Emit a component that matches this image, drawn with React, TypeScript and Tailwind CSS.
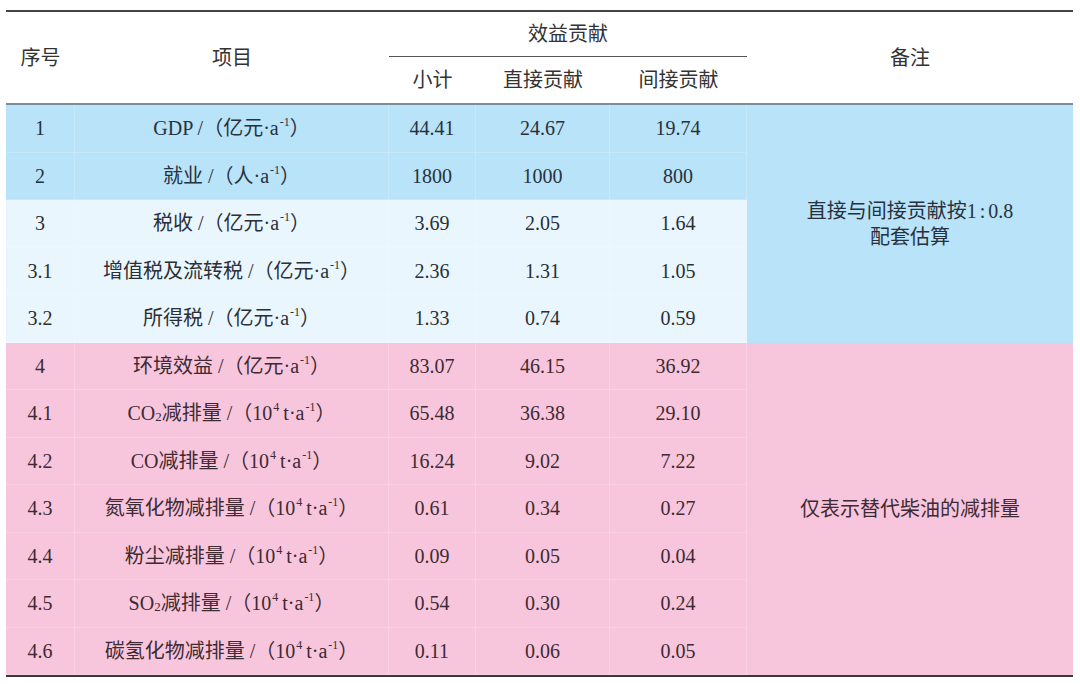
import React from "react";

type Row = {
  no: string;
  item: React.ReactNode;
  sub: string;
  direct: string;
  indirect: string;
  tone: "blue" | "light" | "pink";
};

const Inv = () => (
  <>
    a<sup className="text-[12px] ml-[1px]">-1</sup>
  </>
);
const Ton = () => (
  <>
    10<sup className="text-[12px] ml-[1px]">4</sup>
    <span className="ml-[4px]">t</span>·<Inv />
  </>
);
const Sub2 = () => <sub className="text-[13px]">2</sub>;

const rows: Row[] = [
  { no: "1", item: <>GDP /（亿元·<Inv />）</>, sub: "44.41", direct: "24.67", indirect: "19.74", tone: "blue" },
  { no: "2", item: <>就业 /（人·<Inv />）</>, sub: "1800", direct: "1000", indirect: "800", tone: "blue" },
  { no: "3", item: <>税收 /（亿元·<Inv />）</>, sub: "3.69", direct: "2.05", indirect: "1.64", tone: "light" },
  { no: "3.1", item: <>增值税及流转税 /（亿元·<Inv />）</>, sub: "2.36", direct: "1.31", indirect: "1.05", tone: "light" },
  { no: "3.2", item: <>所得税 /（亿元·<Inv />）</>, sub: "1.33", direct: "0.74", indirect: "0.59", tone: "light" },
  { no: "4", item: <>环境效益 /（亿元·<Inv />）</>, sub: "83.07", direct: "46.15", indirect: "36.92", tone: "pink" },
  { no: "4.1", item: <>CO<Sub2 />减排量 /（<Ton />）</>, sub: "65.48", direct: "36.38", indirect: "29.10", tone: "pink" },
  { no: "4.2", item: <>CO减排量 /（<Ton />）</>, sub: "16.24", direct: "9.02", indirect: "7.22", tone: "pink" },
  { no: "4.3", item: <>氮氧化物减排量 /（<Ton />）</>, sub: "0.61", direct: "0.34", indirect: "0.27", tone: "pink" },
  { no: "4.4", item: <>粉尘减排量 /（<Ton />）</>, sub: "0.09", direct: "0.05", indirect: "0.04", tone: "pink" },
  { no: "4.5", item: <>SO<Sub2 />减排量 /（<Ton />）</>, sub: "0.54", direct: "0.30", indirect: "0.24", tone: "pink" },
  { no: "4.6", item: <>碳氢化物减排量 /（<Ton />）</>, sub: "0.11", direct: "0.06", indirect: "0.05", tone: "pink" },
];

const toneCls = {
  blue: "bg-[#b9e3f8] text-[#27313d]",
  light: "bg-[#eaf6fe] text-[#2a2f36]",
  pink: "bg-[#f8c6dc] text-[#3d2a33]",
};

const cell = "flex items-center justify-center border-b border-r border-white/20";
const cols = "grid-cols-[69px_314px_87px_134px_137px_326px]";

export default function App() {
  return (
    <div
      className="min-h-screen bg-white pt-[10px] px-[6px]"
      style={{ fontFamily: '"Liberation Serif", "Noto Sans CJK SC", serif' }}
    >
      <div className="w-[1067px] text-[20px] leading-none">
        {/* Header */}
        <div
          className={`grid ${cols} grid-rows-[45px_46px] border-t-2 border-b-2 border-t-[#444] border-b-[#7f8d9a] text-[#333]`}
        >
          <div className="row-span-2 flex items-center justify-center">序号</div>
          <div className="row-span-2 flex items-center justify-center">项目</div>
          <div className="col-span-3 flex items-center justify-center border-b border-[#555]">效益贡献</div>
          <div className="row-span-2 flex items-center justify-center">备注</div>
          <div className="flex items-center justify-center">小计</div>
          <div className="flex items-center justify-center">直接贡献</div>
          <div className="flex items-center justify-center">间接贡献</div>
        </div>

        {/* Body */}
        <div className={`grid ${cols} grid-rows-[repeat(12,47.5px)] border-b-2 border-[#3a3a3a]`}>
          {rows.map((r, i) => (
            <React.Fragment key={r.no}>
              <div className={`${toneCls[r.tone]} ${cell}`}>{r.no}</div>
              <div className={`${toneCls[r.tone]} ${cell}`}>{r.item}</div>
              <div className={`${toneCls[r.tone]} ${cell}`}>{r.sub}</div>
              <div className={`${toneCls[r.tone]} ${cell}`}>{r.direct}</div>
              <div className={`${toneCls[r.tone]} ${cell}`}>{r.indirect}</div>
              {i === 0 && (
                <div className="row-span-5 bg-[#b9e3f8] text-[#27313d] flex flex-col items-center justify-center gap-[6px]">
                  <span>直接与间接贡献按1<span className="mx-[3px]">:</span>0.8</span>
                  <span>配套估算</span>
                </div>
              )}
              {i === 5 && (
                <div className="row-span-7 bg-[#f8c6dc] text-[#3d2a33] flex items-center justify-center">
                  仅表示替代柴油的减排量
                </div>
              )}
            </React.Fragment>
          ))}
        </div>
      </div>
    </div>
  );
}
